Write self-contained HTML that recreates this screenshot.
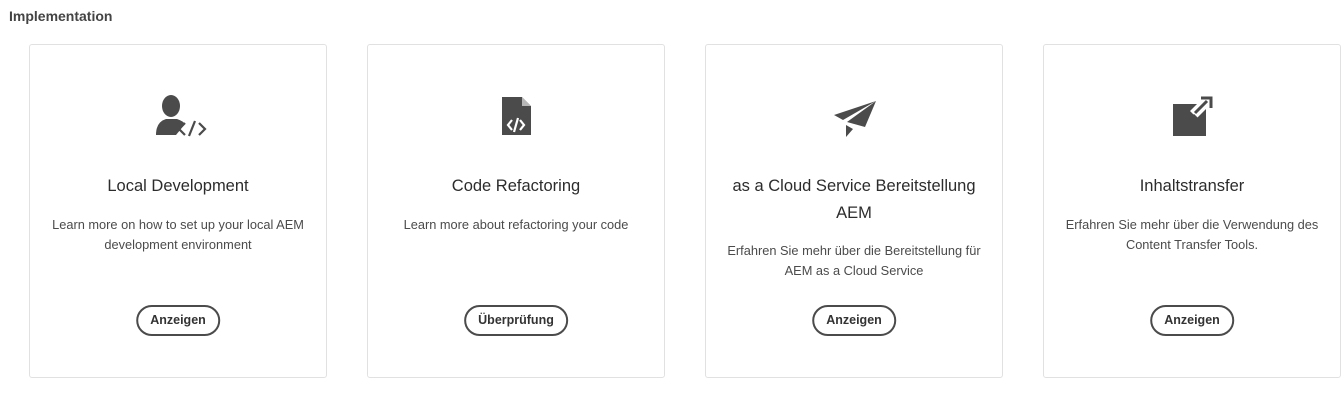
<!DOCTYPE html>
<html><head><style>
body{margin:0;width:1344px;height:405px;background:#fff;font-family:"Liberation Sans",sans-serif;color:#2c2c2c;position:relative;overflow:hidden}
h2{position:absolute;left:9px;top:8px;margin:0;font-size:14px;font-weight:bold;color:#444}
.card{position:absolute;top:44px;width:296px;height:332px;border:1px solid #e1e1e1;border-radius:3px;text-align:center}
.ic{position:absolute;left:0;right:0;top:50px;height:42px}
.t{position:absolute;left:20px;right:20px;top:130px;font-size:16.5px;line-height:26px;color:#2c2c2c}
.d{position:absolute;left:18px;right:18px;font-size:12.8px;line-height:20px;color:#4b4b4b}
.b{position:absolute;left:50%;transform:translateX(-50%);top:260px;height:27px;border:2px solid #4b4b4b;border-radius:16px;padding:0 12px;font-size:12.5px;font-weight:bold;line-height:27px;color:#333;white-space:nowrap}
</style></head><body>
<h2>Implementation</h2>
<div class="card" style="left:29px">
<svg class="ic" viewBox="0 0 296 42"><g fill="#4b4b4b"><ellipse cx="141" cy="11" rx="9" ry="11"/><path d="M126 40 Q126 27 136 24 L147 24 Q153 26 155 29 L146 40 Z"/></g><g fill="none" stroke="#4b4b4b" stroke-width="2.2"><path d="M155 28 L149 34 L155 40 M165 26 L159 41 M169 28 L175 34 L169 40"/></g></svg>
<div class="t" style="top:128px">Local Development</div>
<div class="d" style="top:170px">Learn more on how to set up your local AEM development environment</div>
<div class="b">Anzeigen</div></div>
<div class="card" style="left:367px">
<svg class="ic" viewBox="0 0 296 42"><path fill="#4b4b4b" d="M134 2 L154 2 L163 11 L163 40 L134 40 Z"/><path fill="#fff" d="M154 2 L154 11 L163 11 Z" opacity=".6"/><g fill="none" stroke="#fff" stroke-width="2.2"><path d="M144 25 L140 30 L144 35 M150 23 L146 37 M152 25 L156 30 L152 35"/></g></svg>
<div class="t" style="top:128px">Code Refactoring</div>
<div class="d" style="top:170px">Learn more about refactoring your code</div>
<div class="b">Überprüfung</div></div>
<div class="card" style="left:705px">
<svg class="ic" viewBox="0 0 296 42"><g fill="#4b4b4b"><path d="M128 20 L170 6 L137 25 Z"/><path d="M141 27 L170 6 L159 32 Z"/><path d="M140 30 L140 42 L147 34 Z"/></g></svg>
<div class="t" style="top:128px;line-height:27px">as a Cloud Service Bereitstellung AEM</div>
<div class="d" style="top:196px">Erfahren Sie mehr über die Bereitstellung für AEM as a Cloud Service</div>
<div class="b">Anzeigen</div></div>
<div class="card" style="left:1043px">
<svg class="ic" viewBox="0 0 296 42"><path fill="#4b4b4b" d="M129 9 L153 9 L146 16 L153 23 L162 14 L162 41 L129 41 Z"/><path fill="none" stroke="#4b4b4b" stroke-width="3" d="M151 18 L163 6 M157 3 L167 3 L167 13 M149 20 L154 25"/></svg>
<div class="t" style="top:128px">Inhaltstransfer</div>
<div class="d" style="top:170px">Erfahren Sie mehr über die Verwendung des Content Transfer Tools.</div>
<div class="b">Anzeigen</div></div>
</body></html>
